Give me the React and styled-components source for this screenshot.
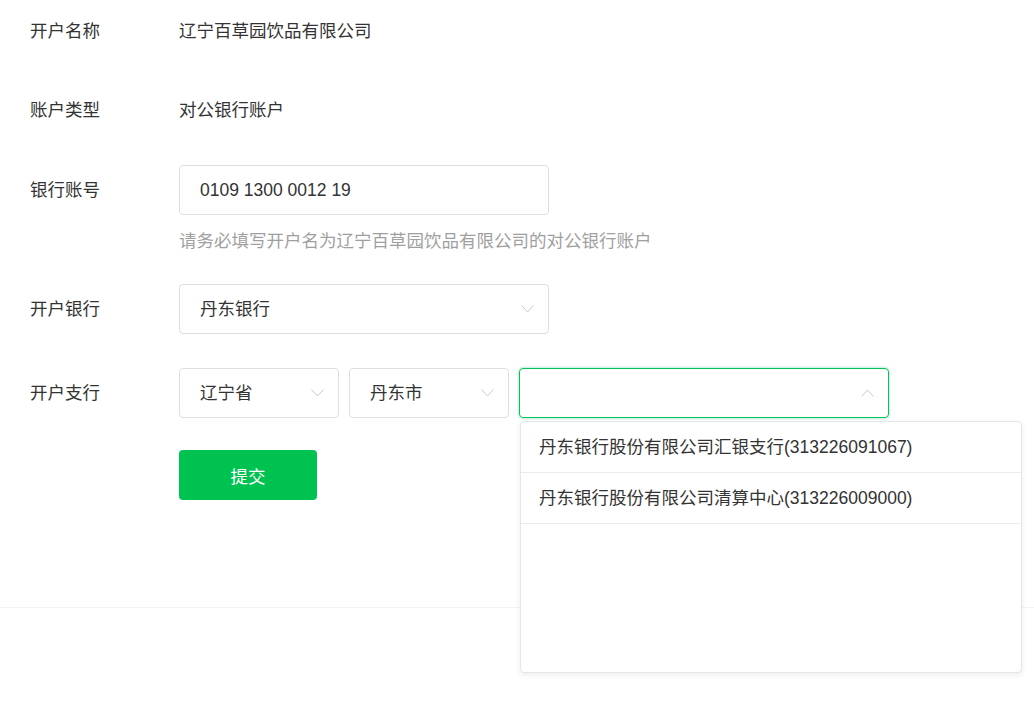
import React from "react";
import styled, { createGlobalStyle } from "styled-components";

const GlobalStyle = createGlobalStyle`
  html, body {
    margin: 0;
    padding: 0;
    background: #ffffff;
  }
  body {
    font-family: "Liberation Sans", "Noto Sans CJK SC", sans-serif;
    font-size: 17.5px;
    color: #333333;
  }
  * { box-sizing: border-box; }
`;

const Page = styled.div`
  min-height: 721px;
  background: #ffffff;
`;

const Panel = styled.div`
  height: 608px;
  border-bottom: 1px solid #f3f3f3;
  padding: 6px 0 0 30px;
`;

const Row = styled.div`
  display: grid;
  grid-template-columns: 149px auto;
  align-items: start;
  margin-bottom: ${(p) => p.$mb || 0}px;
`;

const Label = styled.div`
  line-height: 50px;
  height: 50px;
  color: #333333;
  white-space: nowrap;
`;

const Value = styled.div`
  line-height: 50px;
  height: 50px;
  color: #333333;
  white-space: nowrap;
`;

const Field = styled.div`
  display: flex;
  flex-direction: column;
`;

const Input = styled.div`
  width: 370px;
  height: 50px;
  border: 1px solid #dfdfdf;
  border-radius: 4px;
  padding: 0 20px;
  line-height: 48px;
  color: #333333;
`;

const Hint = styled.div`
  margin-top: 14px;
  line-height: 24px;
  color: #9f9f9f;
  white-space: nowrap;
`;

const SelectGroup = styled.div`
  display: flex;
  gap: 10px;
`;

const SelectWrap = styled.div`
  position: relative;
`;

const SelectBox = styled.div`
  position: relative;
  width: ${(p) => p.$w}px;
  height: 50px;
  border: 1px solid ${(p) => (p.$active ? "#07c160" : "#dfdfdf")};
  box-shadow: ${(p) => (p.$active ? "0 0 2px 1px rgba(7,193,96,0.25)" : "none")};
  border-radius: 4px;
  padding: 0 40px 0 20px;
  line-height: 48px;
  color: #333333;
  white-space: nowrap;
`;

const Arrow = styled.svg`
  position: absolute;
  right: 14px;
  top: 50%;
  width: 13px;
  height: 8px;
  margin-top: -4px;
`;

const Dropdown = styled.div`
  position: absolute;
  top: calc(100% + 3px);
  left: 1px;
  width: 502px;
  height: 252px;
  background: #ffffff;
  border: 1px solid #e4e6eb;
  border-radius: 4px;
  box-shadow: 0 2px 6px rgba(0, 0, 0, 0.08);
  z-index: 10;
  overflow: hidden;
`;

const Option = styled.div`
  height: 51px;
  line-height: 50px;
  padding-left: 18px;
  border-bottom: 1px solid #ececec;
  color: #333333;
  white-space: nowrap;
`;

const SubmitButton = styled.button`
  width: 138px;
  height: 50px;
  border: none;
  border-radius: 4px;
  background: #00c250;
  color: #ffffff;
  font-family: inherit;
  font-size: 17.5px;
  cursor: pointer;
`;

function Chevron({ up }) {
  return (
    <Arrow viewBox="0 0 13 8">
      <polyline
        points={up ? "0.5,7.5 6.5,1 12.5,7.5" : "0.5,0.5 6.5,7 12.5,0.5"}
        fill="none"
        stroke="#c8c8c8"
        strokeWidth="1"
      />
    </Arrow>
  );
}

function Select({ width, value, active, children }) {
  return (
    <SelectWrap>
      <SelectBox $w={width} $active={active}>
        {value}
        <Chevron up={active} />
      </SelectBox>
      {children}
    </SelectWrap>
  );
}

export default function App() {
  const branches = [
    "丹东银行股份有限公司汇银支行(313226091067)",
    "丹东银行股份有限公司清算中心(313226009000)",
  ];
  return (
    <Page>
      <GlobalStyle />
      <Panel>
        <Row $mb={29}>
          <Label>开户名称</Label>
          <Value>辽宁百草园饮品有限公司</Value>
        </Row>
        <Row $mb={30}>
          <Label>账户类型</Label>
          <Value>对公银行账户</Value>
        </Row>
        <Row $mb={31}>
          <Label>银行账号</Label>
          <Field>
            <Input>0109 1300 0012 19</Input>
            <Hint>请务必填写开户名为辽宁百草园饮品有限公司的对公银行账户</Hint>
          </Field>
        </Row>
        <Row $mb={34}>
          <Label>开户银行</Label>
          <Select width={370} value="丹东银行" />
        </Row>
        <Row $mb={32}>
          <Label>开户支行</Label>
          <SelectGroup>
            <Select width={160} value="辽宁省" />
            <Select width={160} value="丹东市" />
            <Select width={370} value="" active>
              <Dropdown>
                {branches.map((b) => (
                  <Option key={b}>{b}</Option>
                ))}
              </Dropdown>
            </Select>
          </SelectGroup>
        </Row>
        <Row>
          <Label />
          <SubmitButton>提交</SubmitButton>
        </Row>
      </Panel>
    </Page>
  );
}
